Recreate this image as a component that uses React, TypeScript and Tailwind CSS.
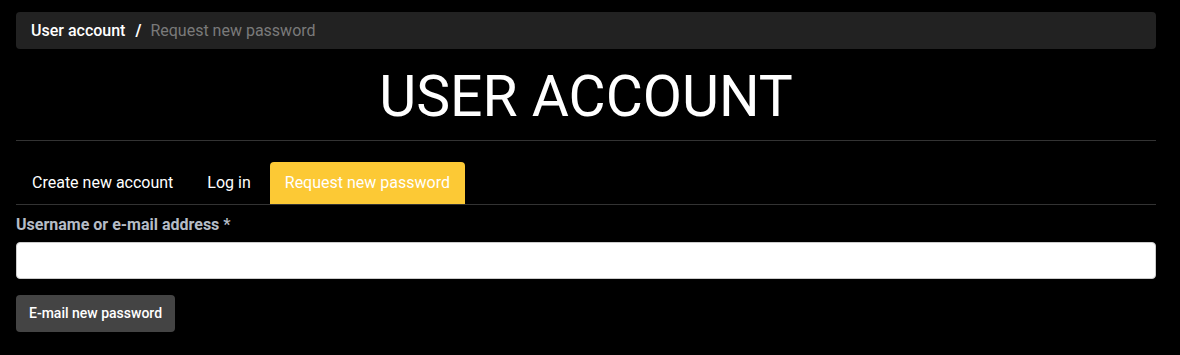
import React from "react";

const tabs = [
  { label: "Create new account", active: false },
  { label: "Log in", active: false },
  { label: "Request new password", active: true },
];

export default function App() {
  return (
    <main className="min-h-screen bg-black pt-3 font-['Roboto',_'Liberation_Sans',_sans-serif] text-white">
      <div className="ml-4 w-[1140px]">
        {/* Breadcrumb */}
        <nav className="flex h-[37px] items-center gap-[10px] rounded bg-[#222] px-[15px] text-[16px]">
          <span className="font-medium text-white">User account</span>
          <span className="font-bold text-white">/</span>
          <span className="-ml-px text-[#7a7a7a]">Request new password</span>
        </nav>

        <h1 className="mt-[14px] text-center text-[57px] leading-[67px] font-normal uppercase">
          User account
        </h1>
        <div className="mt-[10px] h-px bg-[#333]" />

        {/* Tabs */}
        <ul className="mt-[21px] flex gap-[2px] border-b border-[#333]">
          {tabs.map((tab) => (
            <li
              key={tab.label}
              className={
                tab.active
                  ? "ml-px rounded-t bg-[#fcc935] px-[15px] py-[10px] text-[16px] leading-[22px] text-white"
                  : "px-4 py-[10px] text-[16px] leading-[22px] text-white"
              }
            >
              {tab.label}
            </li>
          ))}
        </ul>

        <form className="mt-[9px]">
          <label className="block text-[16px] leading-[22px] font-bold text-[#b5bcc6]">
            Username or e-mail address *
          </label>
          <input
            type="text"
            className="mt-[6px] block h-[37px] w-full rounded border border-[#ccc] bg-white px-3 text-black outline-none"
          />
          <button
            type="button"
            className="mt-[16px] h-[37px] rounded bg-[#444] px-[13px] text-[14px] font-medium text-white"
          >
            E-mail new password
          </button>
        </form>
      </div>
    </main>
  );
}
